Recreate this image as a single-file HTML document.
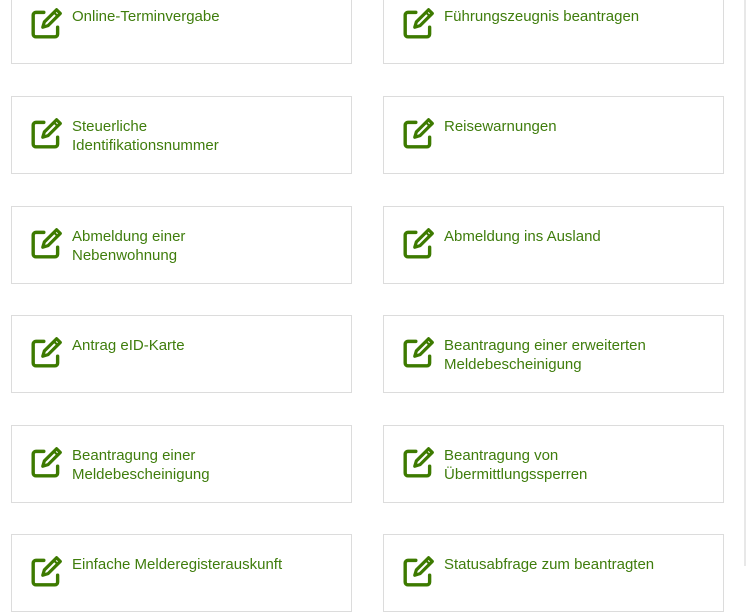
<!DOCTYPE html>
<html><head><meta charset="utf-8"><style>
html,body{margin:0;padding:0;width:746px;height:566px;overflow:hidden;background:#fff;font-family:"Liberation Sans",Arial,sans-serif;}
.sb{position:absolute;left:744px;top:0;width:2px;height:566px;background:#e8e8e8;}
.card{position:absolute;width:339px;height:76px;border:1px solid #dcdcdc;background:#fff;box-sizing:content-box;}
.card svg{position:absolute;left:18px;top:19px;}
.card .t{position:absolute;left:60px;top:20px;width:270px;color:#3f7d0c;font-size:15px;line-height:19px;}
</style></head><body>
<div class="sb"></div>
<svg width="0" height="0" style="position:absolute"><defs>
<symbol id="ic" viewBox="0 0 32 32">
<path d="M13 6H5.5A2.5 2.5 0 0 0 3 8.5v18A2.5 2.5 0 0 0 5.5 29h18a2.5 2.5 0 0 0 2.5-2.5V20" fill="none" stroke="#3d7a00" stroke-width="3.2" stroke-linecap="round"/>
<path d="M25 3.5l3.5 3.5L17 18.5l-5 1.5 1.5-5z" fill="none" stroke="#3d7a00" stroke-width="3" stroke-linejoin="round"/>
<path d="M22.5 6l3.5 3.5" stroke="#3d7a00" stroke-width="2"/>
</symbol></defs></svg>

<div class="card" style="left:11px;top:-14px"><svg width="34" height="34"><use href="#ic"/></svg><div class="t">Online-Terminvergabe</div></div>
<div class="card" style="left:383px;top:-14px"><svg width="34" height="34"><use href="#ic"/></svg><div class="t">Führungszeugnis beantragen</div></div>

<div class="card" style="left:11px;top:96px"><svg width="34" height="34"><use href="#ic"/></svg><div class="t">Steuerliche<br>Identifikationsnummer</div></div>
<div class="card" style="left:383px;top:96px"><svg width="34" height="34"><use href="#ic"/></svg><div class="t">Reisewarnungen</div></div>

<div class="card" style="left:11px;top:206px"><svg width="34" height="34"><use href="#ic"/></svg><div class="t">Abmeldung einer<br>Nebenwohnung</div></div>
<div class="card" style="left:383px;top:206px"><svg width="34" height="34"><use href="#ic"/></svg><div class="t">Abmeldung ins Ausland</div></div>

<div class="card" style="left:11px;top:315px"><svg width="34" height="34"><use href="#ic"/></svg><div class="t">Antrag eID-Karte</div></div>
<div class="card" style="left:383px;top:315px"><svg width="34" height="34"><use href="#ic"/></svg><div class="t">Beantragung einer erweiterten<br>Meldebescheinigung</div></div>

<div class="card" style="left:11px;top:425px"><svg width="34" height="34"><use href="#ic"/></svg><div class="t">Beantragung einer<br>Meldebescheinigung</div></div>
<div class="card" style="left:383px;top:425px"><svg width="34" height="34"><use href="#ic"/></svg><div class="t">Beantragung von<br>Übermittlungssperren</div></div>

<div class="card" style="left:11px;top:534px"><svg width="34" height="34"><use href="#ic"/></svg><div class="t">Einfache Melderegisterauskunft</div></div>
<div class="card" style="left:383px;top:534px"><svg width="34" height="34"><use href="#ic"/></svg><div class="t">Statusabfrage zum beantragten</div></div>
</body></html>
